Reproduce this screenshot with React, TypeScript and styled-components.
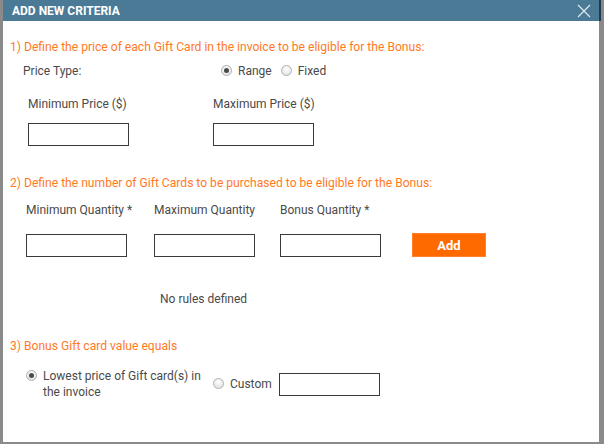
import React from 'react';
import styled, { createGlobalStyle } from 'styled-components';

const GlobalStyle = createGlobalStyle`
  html, body {
    margin: 0;
    padding: 0;
    background: #8a8a8a;
  }
  * {
    box-sizing: border-box;
  }
`;

const Frame = styled.div`
  width: 604px;
  height: 444px;
  background: #8a8a8a;
  padding: 0 5px 2px 3px;
  font-family: Roboto, 'Liberation Sans', sans-serif;
`;

const Dialog = styled.div`
  height: 100%;
  background: #ffffff;
  display: flex;
  flex-direction: column;
`;

const Header = styled.div`
  height: 21px;
  background: #4b7a96;
  border-right: 2px solid #1f3a4c;
  margin-right: -2px;
  display: flex;
  align-items: center;
  justify-content: space-between;
  padding: 0 8px 0 9px;
  color: #ffffff;
  font-weight: 700;
  font-size: 12px;
`;

const CloseButton = styled.button`
  background: none;
  border: none;
  padding: 0;
  width: 14px;
  height: 14px;
  display: flex;
  cursor: pointer;
`;

const Body = styled.div`
  padding: 18px 0 0 7px;
  color: #4a4a4a;
  font-size: 12px;
`;

const SectionTitle = styled.div<{ $top?: number }>`
  color: #ff7a1f;
  font-size: 12.1px;
  line-height: 16px;
  margin-top: ${({ $top }) => $top ?? 0}px;
`;

const Row = styled.div<{ $top: number; $left: number }>`
  display: flex;
  align-items: center;
  margin-top: ${({ $top }) => $top}px;
  padding-left: ${({ $left }) => $left}px;
`;

const Field = styled.div<{ $width: number; $offset?: number }>`
  width: ${({ $width }) => $width}px;
  margin-left: ${({ $offset }) => $offset ?? 0}px;
  flex-shrink: 0;
  line-height: 16px;
`;

const TextBox = styled.input`
  width: 101px;
  height: 23px;
  border: 1px solid #3a3a3a;
  background: #ffffff;
  padding: 0 4px;
  font-family: inherit;
  font-size: 12px;
  outline: none;
`;

const AddButton = styled.button`
  width: 74px;
  height: 24px;
  background: #ff6a00;
  border: 1px solid #ff7f2a;
  color: #ffffff;
  font-family: inherit;
  font-weight: 700;
  font-size: 13px;
  cursor: pointer;
`;

const RadioLabel = styled.label`
  display: flex;
  align-items: flex-start;
  gap: 6px;
  line-height: 16px;
`;

const RadioDot = styled.span<{ $checked?: boolean }>`
  width: 11px;
  height: 11px;
  margin-top: 2px;
  flex-shrink: 0;
  border-radius: 50%;
  border: 1px solid #b0b0b0;
  background: radial-gradient(circle at 50% 35%, #ffffff 0%, #dcdcdc 100%);
  display: flex;
  align-items: center;
  justify-content: center;

  &::after {
    content: '';
    width: 5px;
    height: 5px;
    border-radius: 50%;
    background: ${({ $checked }) => ($checked ? '#4a4a4a' : 'transparent')};
  }
`;

const RadioGroup = styled.div<{ $gap: number }>`
  display: flex;
  align-items: center;
  gap: ${({ $gap }) => $gap}px;
`;

const Empty = styled.div`
  margin-top: 34px;
  padding-left: 150px;
  line-height: 16px;
`;

const OptionText = styled.span`
  display: inline-block;
  width: 162px;
`;

const Radio: React.FC<{ checked?: boolean; children: React.ReactNode }> = ({ checked, children }) => (
  <RadioLabel>
    <RadioDot $checked={checked} />
    <span>{children}</span>
  </RadioLabel>
);

const App: React.FC = () => (
  <>
    <GlobalStyle />
    <Frame>
      <Dialog>
        <Header>
          <span>ADD NEW CRITERIA</span>
          <CloseButton aria-label="close">
            <svg width="14" height="14" viewBox="0 0 14 14">
              <path d="M1 1L13 13M13 1L1 13" stroke="#dfe9ef" strokeWidth="1.2" />
            </svg>
          </CloseButton>
        </Header>
        <Body>
          <SectionTitle>1) Define the price of each Gift Card in the invoice to be eligible for the Bonus:</SectionTitle>
          <Row $top={8} $left={13}>
            <Field $width={198}>Price Type:</Field>
            <RadioGroup $gap={9}>
              <Radio checked>Range</Radio>
              <Radio>Fixed</Radio>
            </RadioGroup>
          </Row>
          <Row $top={17} $left={18}>
            <Field $width={185}>Minimum Price ($)</Field>
            <Field $width={185}>Maximum Price ($)</Field>
          </Row>
          <Row $top={11} $left={18}>
            <Field $width={185}><TextBox /></Field>
            <Field $width={185}><TextBox /></Field>
          </Row>
          <SectionTitle $top={29}>2) Define the number of Gift Cards to be purchased to be eligible for the Bonus:</SectionTitle>
          <Row $top={11} $left={16}>
            <Field $width={128}>Minimum Quantity *</Field>
            <Field $width={126}>Maximum Quantity</Field>
            <Field $width={132}>Bonus Quantity *</Field>
          </Row>
          <Row $top={15} $left={16}>
            <Field $width={128}><TextBox /></Field>
            <Field $width={126}><TextBox /></Field>
            <Field $width={132}><TextBox /></Field>
            <AddButton>Add</AddButton>
          </Row>
          <Empty>No rules defined</Empty>
          <SectionTitle $top={31}>3) Bonus Gift card value equals</SectionTitle>
          <Row $top={14} $left={16}>
            <Radio checked><OptionText>Lowest price of Gift card(s) in the invoice</OptionText></Radio>
            <Field $width={66} $offset={8}>
              <Radio>Custom</Radio>
            </Field>
            <TextBox />
          </Row>
        </Body>
      </Dialog>
    </Frame>
  </>
);

export default App;
